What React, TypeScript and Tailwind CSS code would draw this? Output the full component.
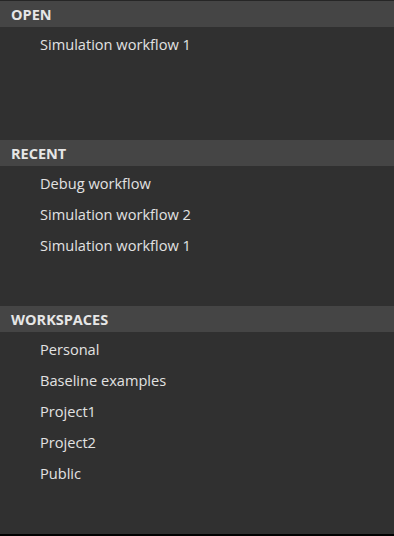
export default function App() {
  const Header = ({ t }: { t: string }) => (
    <div className="h-[26px] bg-[#454545] pl-[11px] pt-[2px] flex items-center text-[14.5px] font-bold text-[#e6e6e6] leading-none">
      {t}
    </div>
  );
  const Item = ({ t }: { t: string }) => (
    <div className="h-[31px] pl-[40px] pt-[2px] flex items-center text-[14.6px] text-[#e2e2e2] leading-none">{t}</div>
  );
  return (
    <div className="w-[394px] h-[536px] bg-[#303030] flex flex-col" style={{ fontFamily: '"Open Sans", sans-serif' }}>
      <div className="h-[1px] bg-[#262626]" />
      <Header t="OPEN" />
      <div className="h-[113px] pt-[1px]">
        <Item t="Simulation workflow 1" />
      </div>
      <Header t="RECENT" />
      <div className="h-[140px] pt-[1px]">
        <Item t="Debug workflow" />
        <Item t="Simulation workflow 2" />
        <Item t="Simulation workflow 1" />
      </div>
      <Header t="WORKSPACES" />
      <div className="flex-1 pt-[1px]">
        <Item t="Personal" />
        <Item t="Baseline examples" />
        <Item t="Project1" />
        <Item t="Project2" />
        <Item t="Public" />
      </div>
      <div className="h-[2px] bg-black" />
    </div>
  );
}
